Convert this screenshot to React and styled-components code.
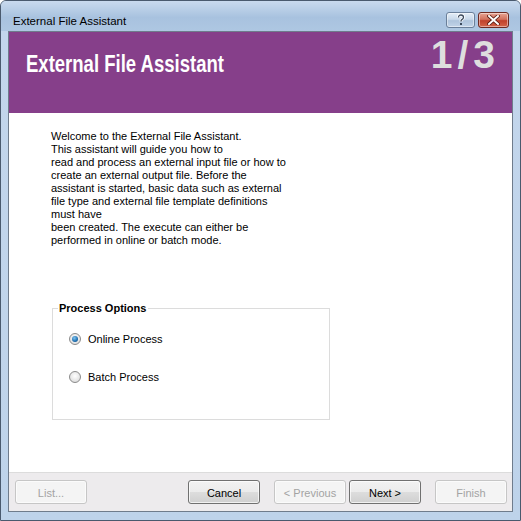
import React from 'react';
import styled, { createGlobalStyle } from 'styled-components';

const GlobalStyles = createGlobalStyle`
  html, body {
    margin: 0;
    padding: 0;
    background: #ffffff;
  }
  *, *::before, *::after {
    box-sizing: border-box;
  }
`;

const uiFont = `"Liberation Sans", Arial, sans-serif`;

const Window = styled.div`
  width: 521px;
  height: 521px;
  display: flex;
  flex-direction: column;
  border: 1px solid #4a5a6e;
  border-radius: 6px 6px 0 0;
  background: linear-gradient(to bottom, #b4cbe4 0px, #c3d6ec 30px, #bed3ea 100%);
  font-family: ${uiFont};
`;

const TitleBar = styled.div`
  height: 30px;
  flex: 0 0 30px;
  display: flex;
  align-items: flex-start;
  padding: 0 11px 0 12px;
  background: linear-gradient(to bottom, #c9daee 0%, #a8c2df 55%, #aec7e2 100%);
  border-radius: 5px 5px 0 0;
`;

const TitleText = styled.div`
  flex: 1;
  font-size: 11.5px;
  line-height: 14px;
  color: #000000;
  padding-top: 13px;
`;

const CaptionButton = styled.div`
  width: ${p => p.$w}px;
  height: 16px;
  margin-left: ${p => p.$gap || 0}px;
  margin-top: 11px;
  border: 1px solid ${p => (p.$close ? '#6d2a22' : '#6a7f99')};
  border-radius: 3px;
  display: flex;
  align-items: center;
  justify-content: center;
  background: ${p =>
    p.$close
      ? 'linear-gradient(to bottom, #e8a493 0%, #d2715d 45%, #c0412b 55%, #d3644a 100%)'
      : 'linear-gradient(to bottom, #e4edf7 0%, #c9d9ea 45%, #aec4dc 55%, #c2d4e8 100%)'};
  box-shadow: inset 0 0 0 1px rgba(255, 255, 255, 0.45);
`;

const Client = styled.div`
  flex: 1;
  margin: 0 7px 8px 7px;
  border: 1px solid #6f7c8c;
  display: flex;
  flex-direction: column;
  background: #ffffff;
`;

const Header = styled.div`
  height: 81px;
  flex: 0 0 81px;
  background: #863f8a;
  display: flex;
  justify-content: space-between;
  padding: 0 17px 0 17px;
`;

const HeaderTitle = styled.div`
  font-weight: bold;
  font-size: 23px;
  line-height: 26px;
  color: #ffffff;
  padding-top: 19px;
  transform: scaleX(0.805);
  transform-origin: left center;
  white-space: nowrap;
`;

const StepNumber = styled.div`
  font-weight: bold;
  font-size: 39px;
  line-height: 1;
  letter-spacing: 5px;
  margin-right: -5px;
  color: #dedede;
  padding-top: 3px;
`;

const Body = styled.div`
  flex: 1;
  padding: 17px 0 0 42px;
  display: flex;
  flex-direction: column;
`;

const Intro = styled.div`
  font-size: 11px;
  line-height: 13px;
  color: #000000;
`;

const GroupBox = styled.fieldset`
  margin: 55px 0 0 1px;
  width: 278px;
  height: 118px;
  border: 1px solid #dcdcdc;
  padding: 0 0 0 5px;
  display: flex;
  flex-direction: column;
  gap: 26px;
`;

const Legend = styled.legend`
  font-size: 11px;
  font-weight: bold;
  padding: 0 2px 0 1px;
  margin: 0;
  color: #000000;
`;

const RadioRow = styled.label`
  display: flex;
  align-items: center;
  gap: 7px;
  margin-left: 11px;
  margin-top: ${p => p.$top || 0}px;
  font-size: 11px;
  color: #000000;
`;

const RadioCircle = styled.span`
  width: 12px;
  height: 12px;
  border-radius: 50%;
  border: 1px solid #8b8b8b;
  background: radial-gradient(circle at 50% 40%, #ffffff 0%, #e6e6e6 60%, #cfcfcf 100%);
  display: flex;
  align-items: center;
  justify-content: center;

  &::after {
    content: '';
    display: ${p => (p.$checked ? 'block' : 'none')};
    width: 6px;
    height: 6px;
    border-radius: 50%;
    background: radial-gradient(circle at 40% 35%, #7fc4f0 0%, #1f6fb0 60%, #0d3f72 100%);
  }
`;

const Footer = styled.div`
  height: 39px;
  flex: 0 0 39px;
  border-top: 1px solid #dcdcdc;
  background: #edebed;
  display: flex;
  align-items: flex-start;
  padding: 7px 4px 0 6px;
`;

const Button = styled.div`
  width: 72px;
  height: 24px;
  margin-left: ${p => p.$gap || 0}px;
  border: 1px solid ${p => (p.$disabled ? '#c6c6c6' : '#707070')};
  border-radius: 3px;
  display: flex;
  align-items: center;
  justify-content: center;
  padding-top: 1px;
  font-size: 11px;
  color: ${p => (p.$disabled ? '#a3a3a3' : '#000000')};
  background: ${p =>
    p.$disabled
      ? '#f4f4f4'
      : 'linear-gradient(to bottom, #f2f2f2 0%, #ebebeb 50%, #dddddd 51%, #cfcfcf 100%)'};
  box-shadow: inset 0 0 0 1px ${p => (p.$disabled ? '#fbfbfb' : 'rgba(255,255,255,0.7)')};
`;

const introLines = [
  'Welcome to the External File Assistant.',
  'This assistant will guide you how to',
  'read and process an external input file or how to',
  'create an external output file. Before the',
  'assistant is started, basic data such as external',
  'file type and external file template definitions',
  'must have',
  'been created. The execute can either be',
  'performed in online or batch mode.',
];

export default function App() {
  return (
    <>
      <GlobalStyles />
      <Window>
        <TitleBar>
          <TitleText>External File Assistant</TitleText>
          <CaptionButton $w={29}>
            <svg width="10" height="12" viewBox="0 0 10 12">
              <path d="M2.5 3.5 Q2.5 1 5 1 Q7.5 1 7.5 3.3 Q7.5 4.8 5.6 5.8 Q5 6.2 5 7.5" fill="none" stroke="#ffffff" strokeWidth="3" />
              <path d="M2.5 3.5 Q2.5 1 5 1 Q7.5 1 7.5 3.3 Q7.5 4.8 5.6 5.8 Q5 6.2 5 7.5" fill="none" stroke="#3c4a5c" strokeWidth="1.3" />
              <rect x="4" y="9" width="2" height="2" fill="#3c4a5c" />
            </svg>
          </CaptionButton>
          <CaptionButton $w={31} $gap={3} $close>
            <svg width="13" height="10" viewBox="0 0 13 10">
              <path d="M2 1 L11 9 M11 1 L2 9" stroke="#5a1a10" strokeWidth="3.6" strokeLinecap="square" />
              <path d="M2 1 L11 9 M11 1 L2 9" stroke="#ffffff" strokeWidth="2" strokeLinecap="square" />
            </svg>
          </CaptionButton>
        </TitleBar>
        <Client>
          <Header>
            <HeaderTitle>External File Assistant</HeaderTitle>
            <StepNumber>1/3</StepNumber>
          </Header>
          <Body>
            <Intro>
              {introLines.map(line => (
                <div key={line}>{line}</div>
              ))}
            </Intro>
            <GroupBox>
              <Legend>Process Options</Legend>
              <RadioRow $top={19}>
                <RadioCircle $checked />
                Online Process
              </RadioRow>
              <RadioRow>
                <RadioCircle />
                Batch Process
              </RadioRow>
            </GroupBox>
          </Body>
          <Footer>
            <Button $disabled>List...</Button>
            <Button $gap={101}>Cancel</Button>
            <Button $gap={14} $disabled>&lt; Previous</Button>
            <Button $gap={3}>Next &gt;</Button>
            <Button $gap={14} $disabled>Finish</Button>
          </Footer>
        </Client>
      </Window>
    </>
  );
}
